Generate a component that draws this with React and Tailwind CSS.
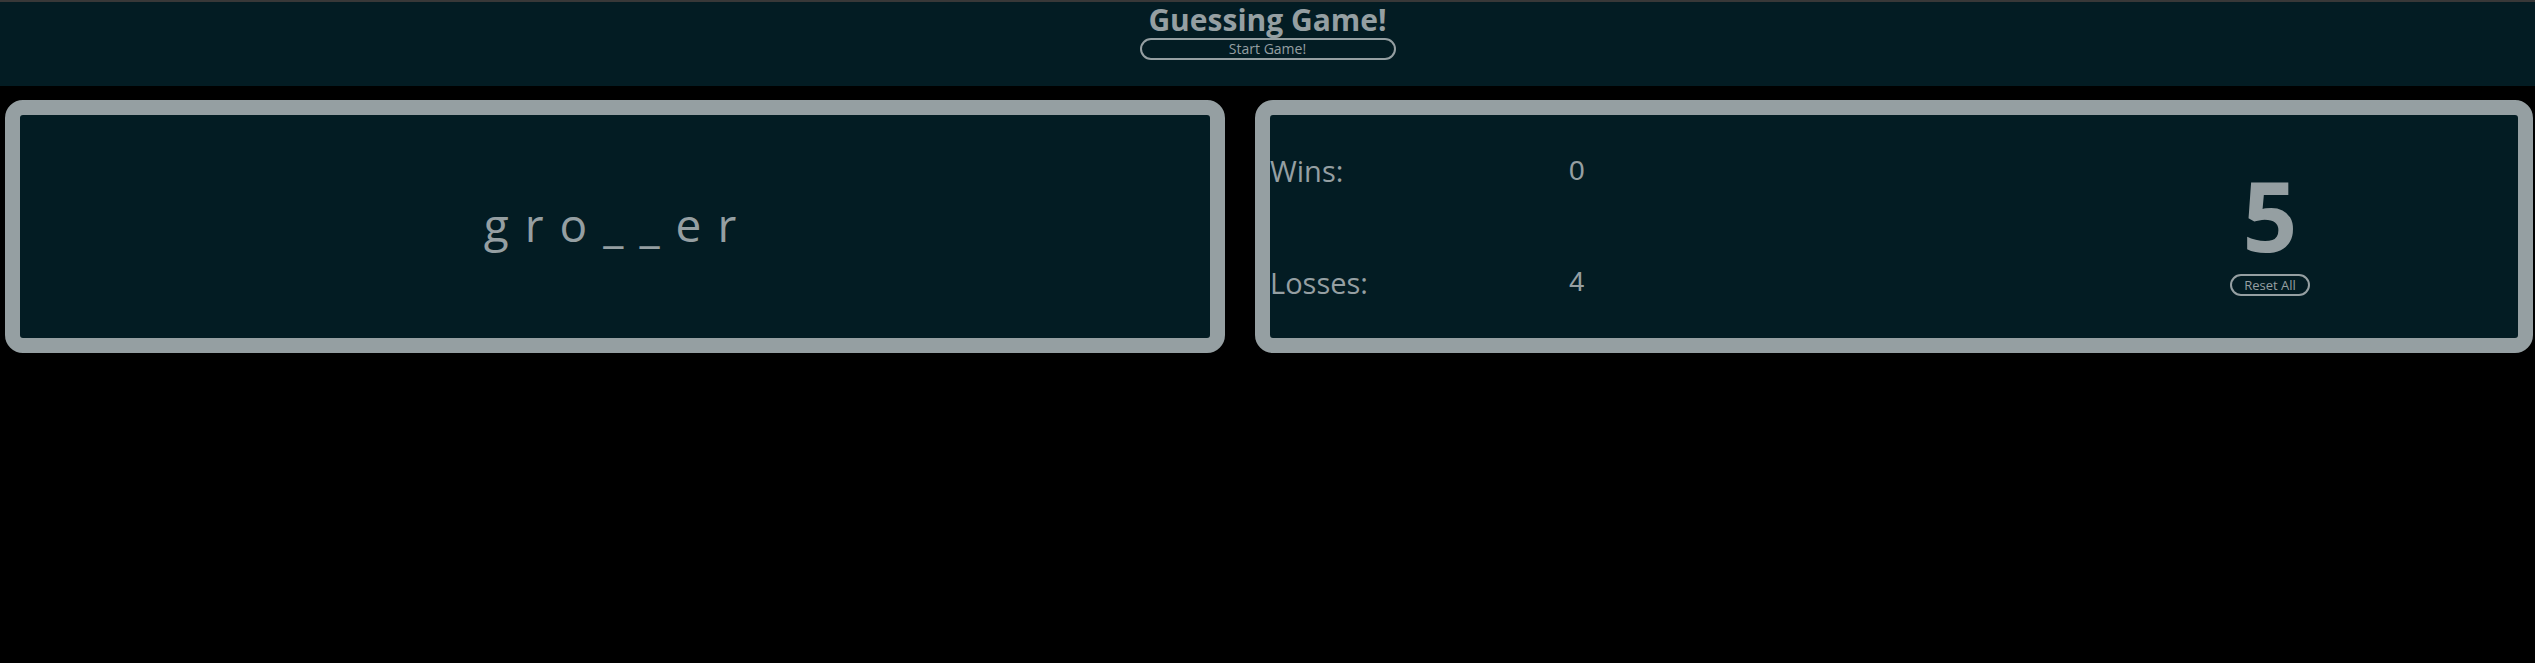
import React from 'react';

const font = { fontFamily: '"Trebuchet MS", "Open Sans", sans-serif' };

export default function App() {
  const wins = 0;
  const losses = 4;
  const guessesLeft = 5;
  const word = 'gro__er';

  return (
    <div className="min-h-[663px] bg-black text-[#959fa2]" style={font}>
      {/* Header */}
      <header className="h-[86px] bg-[#031c23] border-t-2 border-[#383838] flex flex-col items-center">
        <h1 className="text-[30px] font-bold leading-[36px]">Guessing Game!</h1>
        <button className="w-[256px] h-[22px] rounded-full border-2 border-[#959fa2] text-[14px] leading-none text-[#959fa2]">
          Start Game!
        </button>
      </header>

      {/* Panels */}
      <main className="flex pt-[14px] pl-[5px] gap-[30px]">
        <div className="w-[1220px] h-[253px] border-[15px] border-[#959fa2] rounded-[18px] bg-[#031c23] flex items-center justify-center">
          <p className="text-[46px] tracking-[16px] pl-[6px] pb-[4px]">{word}</p>
        </div>

        <div className="w-[1278px] h-[253px] border-[15px] border-[#959fa2] rounded-[18px] bg-[#031c23] flex">
          <div className="flex-1 flex flex-col">
            <div className="flex-1 flex items-center text-[29px]">
              <span className="w-[299px]">Wins:</span>
              <span style={{ fontFamily: '"Liberation Sans", sans-serif' }} className="text-[28px]">{wins}</span>
            </div>
            <div className="flex-1 flex items-center text-[29px]">
              <span className="w-[299px]">Losses:</span>
              <span style={{ fontFamily: '"Liberation Sans", sans-serif' }} className="text-[28px]">{losses}</span>
            </div>
          </div>
          <div className="w-[160px] mr-[168px] flex flex-col items-center pt-[50px]">
            <span className="text-[96px] font-bold leading-[100px]">{guessesLeft}</span>
            <button className="mt-[9px] w-[80px] h-[22px] rounded-full border-2 border-[#959fa2] text-[13px] leading-none text-[#959fa2]">
              Reset All
            </button>
          </div>
        </div>
      </main>
    </div>
  );
}
